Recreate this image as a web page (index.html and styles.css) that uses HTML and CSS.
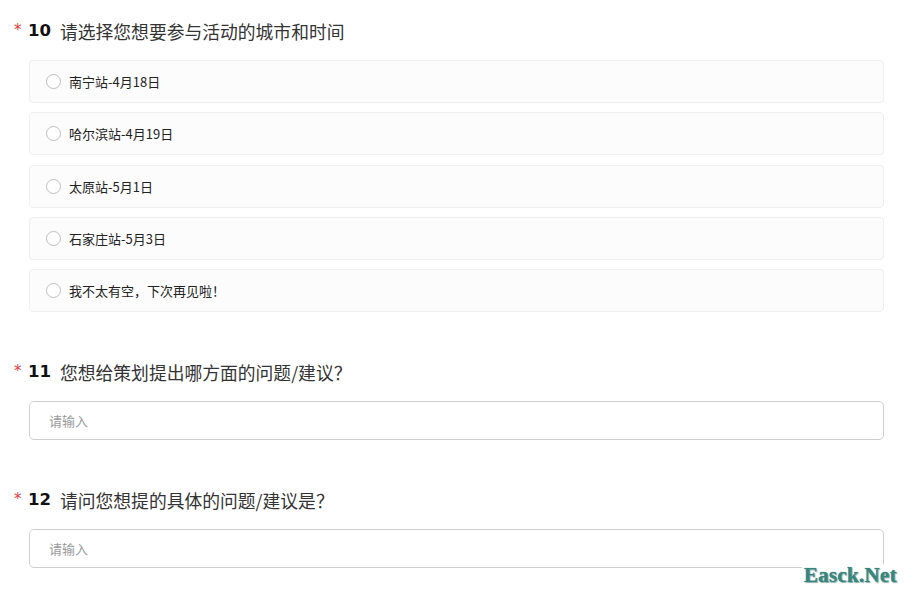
FILE: index.html
```html
<!DOCTYPE html>
<html lang="zh-CN">
<head>
<meta charset="utf-8">
<title>问卷</title>
<link rel="stylesheet" href="styles.css">
</head>
<body>
<div class="page">
  <section class="q q-first">
    <div class="q-title"><span class="star">*</span><span class="num">10</span><span class="text">请选择您想要参与活动的城市和时间</span></div>
    <div class="options">
      <label class="opt"><span class="radio"></span><span class="opt-text">南宁站-4月18日</span></label>
      <label class="opt"><span class="radio"></span><span class="opt-text">哈尔滨站-4月19日</span></label>
      <label class="opt"><span class="radio"></span><span class="opt-text">太原站-5月1日</span></label>
      <label class="opt"><span class="radio"></span><span class="opt-text">石家庄站-5月3日</span></label>
      <label class="opt"><span class="radio"></span><span class="opt-text">我不太有空，下次再见啦！</span></label>
    </div>
  </section>
  <section class="q">
    <div class="q-title"><span class="star">*</span><span class="num">11</span><span class="text">您想给策划提出哪方面的问题/建议？</span></div>
    <div class="input"><span class="ph">请输入</span></div>
  </section>
  <section class="q">
    <div class="q-title"><span class="star">*</span><span class="num">12</span><span class="text">请问您想提的具体的问题/建议是？</span></div>
    <div class="input"><span class="ph">请输入</span></div>
  </section>
</div>
<div class="watermark">Easck.Net</div>
</body>
</html>
```
FILE: styles.css
```css
html, body {
  margin: 0;
  padding: 0;
  background: #fff;
}
body {
  width: 904px;
  height: 591px;
  overflow: hidden;
  position: relative;
  font-family: "Noto Sans CJK SC", "Noto Sans", sans-serif;
  color: #333;
}
.page {
  padding: 19px 20px 0 14px;
}
.q {
  margin-top: 48px;
}
.q-first {
  margin-top: 0;
}
.q-title {
  display: flex;
  align-items: center;
  height: 24px;
  line-height: 24px;
}
.star {
  color: #e4393c;
  font-family: "DejaVu Sans", sans-serif;
  font-size: 15px;
  width: 14px;
  position: relative;
  top: -1px;
}
.num {
  font-family: "DejaVu Sans", sans-serif;
  font-weight: bold;
  font-size: 16.5px;
  color: #111;
  margin-right: 9px;
}
.text {
  font-size: 17.8px;
  color: #333;
}
.options {
  margin: 17px 0 0 15px;
  display: flex;
  flex-direction: column;
  gap: 9.3px;
}
.opt {
  height: 43px;
  box-sizing: border-box;
  border: 1px solid #efefef;
  border-radius: 4px;
  background: #fcfcfc;
  display: flex;
  align-items: center;
  padding-left: 16px;
}
.radio {
  width: 15px;
  height: 15px;
  box-sizing: border-box;
  border: 1px solid #bdbdbd;
  border-radius: 50%;
  background: #fff;
  margin-right: 8px;
}
.opt-text {
  font-size: 13px;
  color: #222;
}
.input {
  margin: 17px 0 0 15px;
  height: 39px;
  box-sizing: border-box;
  border: 1px solid #cfcfcf;
  border-radius: 5px;
  display: flex;
  align-items: center;
  padding-left: 19px;
}
.ph {
  font-size: 13px;
  color: #999;
}
.watermark {
  position: absolute;
  right: 5px;
  bottom: 5px;
  padding: 0 2px;
  background: #fff;
  font-family: "Liberation Serif", serif;
  font-weight: bold;
  font-size: 21px;
  line-height: 22px;
  color: #3a857b;
  text-shadow: 1px 1px 1px #8aa, 0 0 1px #3a857b;
  letter-spacing: 0.3px;
}
```
